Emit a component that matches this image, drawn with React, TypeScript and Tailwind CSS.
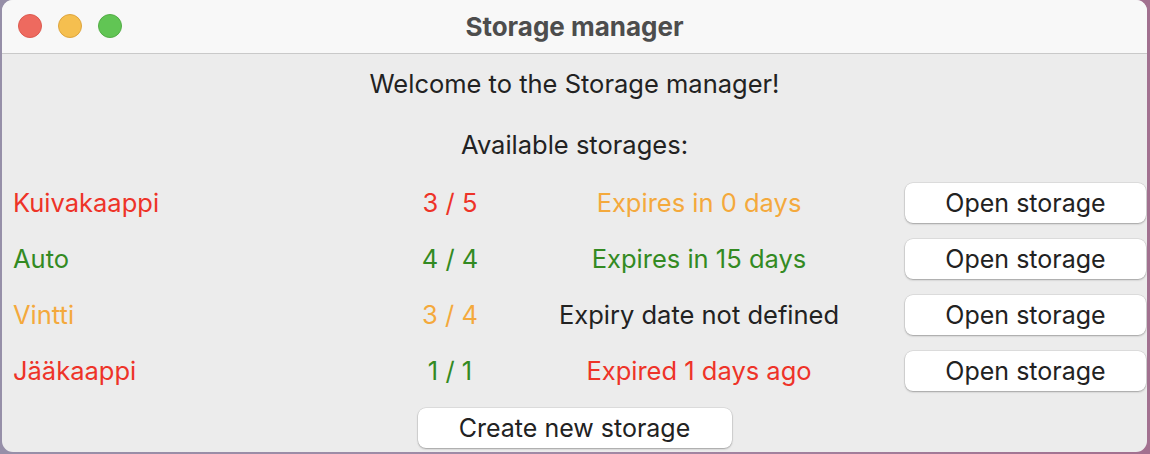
import React from 'react';

type Storage = {
  name: string;
  nameColor: string;
  count: string;
  countColor: string;
  expiry: string;
  expiryColor: string;
};

const storages: Storage[] = [
  { name: 'Kuivakaappi', nameColor: 'text-[#ee3328]', count: '3 / 5', countColor: 'text-[#ee3328]', expiry: 'Expires in 0 days', expiryColor: 'text-[#f4a93c]' },
  { name: 'Auto', nameColor: 'text-[#338a22]', count: '4 / 4', countColor: 'text-[#338a22]', expiry: 'Expires in 15 days', expiryColor: 'text-[#338a22]' },
  { name: 'Vintti', nameColor: 'text-[#f4a93c]', count: '3 / 4', countColor: 'text-[#f4a93c]', expiry: 'Expiry date not defined', expiryColor: 'text-[#222222]' },
  { name: 'Jääkaappi', nameColor: 'text-[#ee3328]', count: '1 / 1', countColor: 'text-[#338a22]', expiry: 'Expired 1 days ago', expiryColor: 'text-[#ee3328]' },
];

const MacButton: React.FC<{ className?: string; children: React.ReactNode }> = ({ className = '', children }) => (
  <button
    className={`h-[40px] whitespace-nowrap rounded-[8px] bg-white text-[25px] leading-[32px] text-[#222222] shadow-[0_1px_2px_rgba(0,0,0,0.28),0_0_0_0.5px_rgba(0,0,0,0.12)] ${className}`}
  >
    {children}
  </button>
);

export default function App() {
  return (
    <div
      className="flex h-[454px] w-[1150px] bg-gradient-to-r from-[#968fa8] via-[#a08aa6] to-[#a2708f] pl-[2px] pr-[3px] pb-[2px]"
      style={{ fontFamily: 'Inter, "Noto Sans", sans-serif' }}
    >
      <div className="flex h-full w-full flex-col overflow-hidden rounded-[11px] bg-[#ececec]">
        {/* title bar */}
        <div className="relative flex h-[54px] shrink-0 items-center justify-center border-b border-[#c9c9c9] bg-[#f8f8f8]">
          <div className="absolute left-[16px] top-[14px] flex gap-[16px]">
            <span className="h-[24px] w-[24px] rounded-full border border-[#dd5a50] bg-[#ee6a5f]" />
            <span className="h-[24px] w-[24px] rounded-full border border-[#dea53e] bg-[#f5bf4f]" />
            <span className="h-[24px] w-[24px] rounded-full border border-[#53ad46] bg-[#61c554]" />
          </div>
          <span className="text-[26px] font-bold text-[#4d4d4d]">Storage manager</span>
        </div>

        <div className="flex flex-1 flex-col text-[25.5px] leading-[32px]">
          <div className="mt-[14px] text-center text-[#222222]">Welcome to the Storage manager!</div>
          <div className="mt-[29px] text-center text-[#222222]">Available storages:</div>

          <div className="mt-[14px] flex flex-col">
            {storages.map((s) => (
              <div key={s.name} className="grid h-[56px] grid-cols-[323px_250px_248px_1fr] items-center whitespace-nowrap">
                <span className={`pl-[11px] ${s.nameColor}`}>{s.name}</span>
                <div className={`flex justify-center ${s.countColor}`}>{s.count}</div>
                <div className={`flex justify-center ${s.expiryColor}`}>{s.expiry}</div>
                <div className="flex justify-end pr-[1px]">
                  <MacButton className="w-[241px]">Open storage</MacButton>
                </div>
              </div>
            ))}
          </div>

          <div className="mt-[9px] flex justify-center">
            <MacButton className="w-[314px]">Create new storage</MacButton>
          </div>
        </div>
      </div>
    </div>
  );
}
